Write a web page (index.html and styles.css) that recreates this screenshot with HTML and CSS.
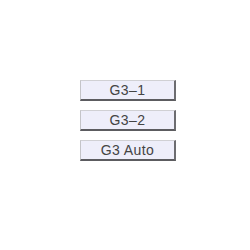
FILE: index.html
```html
<!DOCTYPE html>
<html>
<head>
<meta charset="utf-8">
<link rel="stylesheet" href="styles.css">
</head>
<body>
<div class="stack">
  <button class="btn">G3–1</button>
  <button class="btn">G3–2</button>
  <button class="btn">G3 Auto</button>
</div>
</body>
</html>
```
FILE: styles.css
```css
html, body {
  margin: 0;
  padding: 0;
  background: #ffffff;
}
.stack {
  display: flex;
  flex-direction: column;
  gap: 9px;
  padding: 80px 0 0 80px;
}
.btn {
  box-sizing: border-box;
  width: 96px;
  height: 21px;
  margin: 0;
  padding: 0;
  background: #eeeefa;
  border-style: solid;
  border-width: 1px 2px 2px 1px;
  border-color: #d0d0d4 #6c6c70 #5c5c60 #c4c4c8;
  font-family: "Liberation Sans", Arial, sans-serif;
  font-size: 14px;
  letter-spacing: 0.4px;
  color: #444444;
  line-height: 18px;
  text-align: center;
}
```
